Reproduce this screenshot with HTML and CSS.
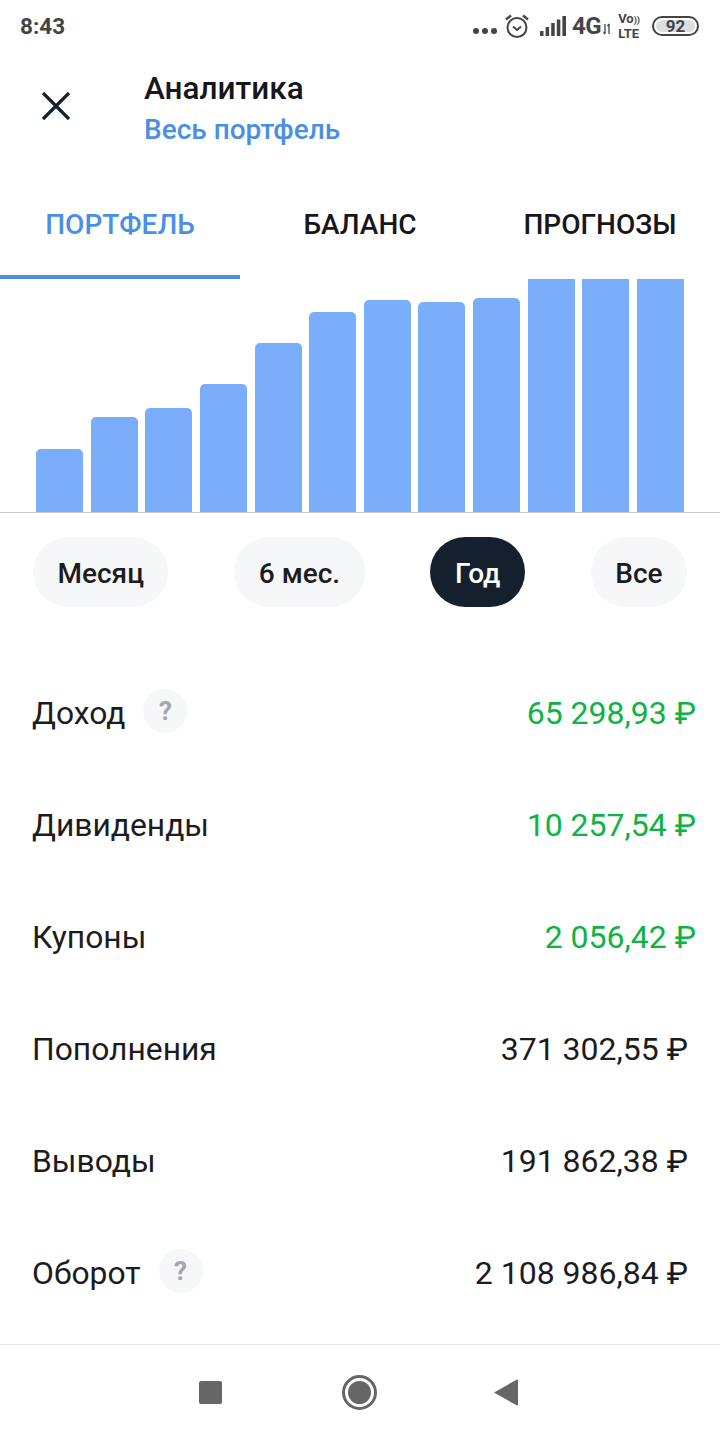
FILE: index.html
```html
<!DOCTYPE html>
<html lang="ru">
<head>
    <meta charset="UTF-8">
    <meta name="viewport" content="width=device-width, initial-scale=1.0">
    <title>Аналитика</title>
    <link rel="stylesheet" href="styles.css">
</head>
<body>
    <div class="status-bar">
        <span class="time">8:43</span>
        <div class="status-icons">
            <span class="dots"><i></i><i></i><i></i></span>
            <svg class="alarm" width="26" height="26" viewBox="0 0 26 26" fill="none" stroke="#444" stroke-width="2">
                <circle cx="13" cy="14.500" r="9.500"/>
                <path d="M9 13.500l4 3.500 4-3.500" stroke-width="1.800"/>
                <path d="M2 6.500L7 2.500M24 6.500L19 2.500" stroke-width="2.400"/>
            </svg>
            <svg class="signal" width="26" height="20" viewBox="0 0 26 20" fill="#444">
                <rect x="0" y="15" width="3.500" height="5"/>
                <rect x="5.600" y="11" width="3.500" height="9"/>
                <rect x="11.200" y="7" width="3.500" height="13"/>
                <rect x="16.800" y="3.500" width="3.500" height="16.500"/>
                <rect x="22.400" y="0" width="3.600" height="20"/>
            </svg>
            <span class="net">4G</span>
            <svg class="updown" width="8" height="12" viewBox="0 0 8 12" fill="none" stroke="#444" stroke-width="1.300">
                <path d="M2 1v10M0.500 9l1.500 2M6 11V1M4.500 3L6 1"/>
            </svg>
            <span class="volte"><span>Vo<small>))</small></span><span>LTE</span></span>
            <span class="battery"><span class="battery-fill">92</span></span>
        </div>
    </div>

    <header class="header">
        <button class="close-btn" type="button">
            <svg width="30" height="30" viewBox="0 0 30 30" fill="none" stroke="#15202f" stroke-width="3.200">
                <path d="M2 2L28 28M28 2L2 28"/>
            </svg>
        </button>
        <div class="header-text">
            <div class="title">Аналитика</div>
            <div class="subtitle">Весь портфель</div>
        </div>
    </header>

    <nav class="tabs">
        <div class="tab tab-active">ПОРТФЕЛЬ</div>
        <div class="tab">БАЛАНС</div>
        <div class="tab">ПРОГНОЗЫ</div>
    </nav>

    <div class="chart">
        <div class="bar" style="height: 63px"></div>
        <div class="bar" style="height: 95px"></div>
        <div class="bar" style="height: 104px"></div>
        <div class="bar" style="height: 128px"></div>
        <div class="bar" style="height: 169px"></div>
        <div class="bar" style="height: 200px"></div>
        <div class="bar" style="height: 212px"></div>
        <div class="bar" style="height: 210px"></div>
        <div class="bar" style="height: 214px"></div>
        <div class="bar bar-full" style="height: 233px"></div>
        <div class="bar bar-full" style="height: 233px"></div>
        <div class="bar bar-full" style="height: 233px"></div>
    </div>

    <div class="periods">
        <div class="chip">Месяц</div>
        <div class="chip">6 мес.</div>
        <div class="chip chip-active">Год</div>
        <div class="chip">Все</div>
    </div>

    <section class="rows">
        <div class="row">
            <div class="row-label">Доход <span class="hint">?</span></div>
            <div class="row-value green">65 298,93 ₽</div>
        </div>
        <div class="row">
            <div class="row-label">Дивиденды</div>
            <div class="row-value green">10 257,54 ₽</div>
        </div>
        <div class="row">
            <div class="row-label">Купоны</div>
            <div class="row-value green">2 056,42 ₽</div>
        </div>
        <div class="row">
            <div class="row-label">Пополнения</div>
            <div class="row-value">371 302,55 ₽</div>
        </div>
        <div class="row">
            <div class="row-label">Выводы</div>
            <div class="row-value">191 862,38 ₽</div>
        </div>
        <div class="row">
            <div class="row-label">Оборот <span class="hint">?</span></div>
            <div class="row-value">2 108 986,84 ₽</div>
        </div>
    </section>

    <footer class="nav-bar">
        <span class="nav-square"></span>
        <span class="nav-home"><i></i></span>
        <svg width="24" height="27" viewBox="0 0 24 27" fill="#666">
            <path d="M23 0.500a1 1 0 0 1 1 1v24a1 1 0 0 1-1 1L0 13.500z"/>
        </svg>
    </footer>
</body>
</html>
```

FILE: styles.css
```css
* {
    box-sizing: border-box;
}

body {
    margin: 0;
    width: 720px;
    height: 1440px;
    overflow: hidden;
    background-color: #fff;
    color: #1c1c1e;
    font-family: Roboto, 'Noto Sans', sans-serif;
}

.status-bar {
    height: 52px;
    padding: 0 21px 0 20px;
    display: flex;
    justify-content: space-between;
    align-items: center;
    color: #444;
}

.time {
    font-size: 22.500px;
    font-weight: 700;
}

.status-icons {
    display: flex;
    align-items: center;
}

.dots {
    display: flex;
    gap: 3px;
    margin-top: 9px;
    margin-right: 7px;
}

.dots i {
    width: 6px;
    height: 6px;
    border-radius: 50%;
    background-color: #444;
}

.alarm {
    margin-right: 10px;
}

.signal {
    margin-right: 6px;
}

.net {
    font-size: 24px;
    font-weight: 700;
    letter-spacing: -0.500px;
}

.updown {
    margin: 6px 7px 0 2px;
}

.volte {
    display: flex;
    flex-direction: column;
    font-size: 13px;
    font-weight: 700;
    line-height: 13px;
    margin-right: 12px;
}

.volte small {
    font-size: 9px;
}

.battery {
    width: 47px;
    height: 20px;
    padding: 2px;
    border: 2px solid #444;
    border-radius: 10px;
    display: flex;
}

.battery-fill {
    flex: 1;
    background-color: #ddd;
    border-radius: 6px;
    font-size: 17px;
    font-weight: 700;
    line-height: 12px;
    text-align: center;
}

.header {
    height: 107px;
    display: flex;
}

.close-btn {
    width: 144px;
    height: 107px;
    padding: 0 0 0 41px;
    border: none;
    background: none;
    display: flex;
    align-items: center;
}

.header-text {
    padding-top: 17px;
}

.title {
    font-size: 31.500px;
    font-weight: 500;
    line-height: 40px;
    color: #17171a;
}

.subtitle {
    font-size: 28px;
    font-weight: 500;
    line-height: 42px;
    color: #4a8fe7;
}

.tabs {
    height: 120px;
    display: flex;
}

.tab {
    width: 240px;
    height: 120px;
    padding-top: 46px;
    font-size: 28px;
    font-weight: 500;
    line-height: 40px;
    text-align: center;
    color: #17171a;
}

.tab-active {
    color: #4a8fe7;
    border-bottom: 4px solid #4a8fe7;
}

.chart {
    height: 234px;
    padding-left: 36px;
    display: flex;
    align-items: flex-end;
    gap: 7.650px;
    border-bottom: 1px solid #c8c8c8;
}

.bar {
    width: 47px;
    background-color: #7aaefb;
    border-radius: 5px 5px 0 0;
}

.bar-full {
    border-radius: 0;
}

.periods {
    height: 70px;
    margin-top: 24px;
    padding: 0 33px;
    display: flex;
    justify-content: space-between;
}

.chip {
    height: 70px;
    padding: 2px 24.500px 0;
    border-radius: 35px;
    background-color: #f5f7f8;
    display: flex;
    align-items: center;
    font-size: 28px;
    font-weight: 500;
}

.chip-active {
    background-color: #14202e;
    color: #fff;
}

.rows {
    margin-top: 50px;
}

.row {
    height: 112px;
    padding: 0 32px;
    display: flex;
    justify-content: space-between;
    align-items: center;
    font-size: 32px;
}

.row-label {
    display: flex;
    align-items: center;
    gap: 18px;
    font-size: 31.800px;
}

.green {
    color: #0cb443;
    margin-right: -8px;
}

.hint {
    width: 44px;
    height: 44px;
    border-radius: 50%;
    background-color: #f5f7f8;
    color: #a3a6ad;
    font-size: 26px;
    font-weight: 700;
    display: flex;
    justify-content: center;
    align-items: center;
    margin-top: -4px;
}

.nav-bar {
    position: absolute;
    left: 0;
    top: 1344px;
    width: 720px;
    height: 96px;
    border-top: 1px solid #e4e4e4;
    padding: 0 202px 0 199px;
    display: flex;
    justify-content: space-between;
    align-items: center;
}

.nav-square {
    width: 23px;
    height: 23px;
    background-color: #666;
    border-radius: 2px;
    margin-top: -1px;
}

.nav-home {
    width: 35px;
    height: 35px;
    margin-left: 3px;
    border: 3px solid #666;
    border-radius: 50%;
    padding: 3px;
    display: flex;
}

.nav-home i {
    flex: 1;
    background-color: #666;
    border-radius: 50%;
}
```
